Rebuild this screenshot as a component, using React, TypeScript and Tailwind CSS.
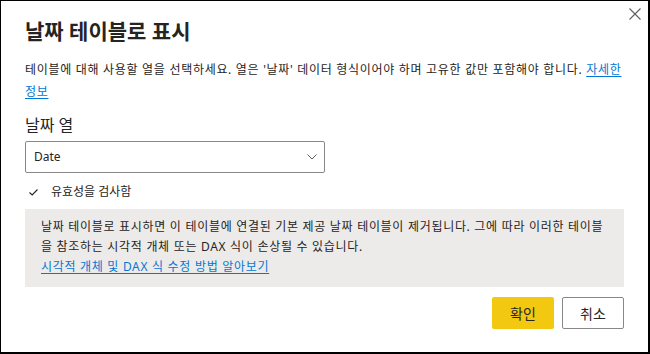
const font = {
  fontFamily: '"Noto Sans", "Noto Sans CJK KR", sans-serif',
};

export default function App() {
  return (
    <div
      style={font}
      className="relative flex h-[354px] w-[650px] flex-col border-t border-l border-r-2 border-b-2 border-black bg-white px-6 text-[#252423]"
    >
      <button type="button" className="absolute right-[7px] top-[7px] text-[#605e5c]">
        <svg width="12" height="12" viewBox="0 0 12 12" fill="none" stroke="currentColor" strokeWidth="1.1">
          <path d="M0.5 0.5 L11.5 11.5 M11.5 0.5 L0.5 11.5" />
        </svg>
      </button>

      <h1 className="mt-[16px] text-[21px] font-bold leading-[28px]">날짜 테이블로 표시</h1>

      <p className="mt-[14px] text-[12px] leading-[22px] tracking-[0.7px]">
        테이블에 대해 사용할 열을 선택하세요. 열은 '날짜' 데이터 형식이어야 하며 고유한 값만 포함해야 합니다.{" "}
        <a className="text-[#0078d4] underline underline-offset-2">자세한 정보</a>
      </p>

      <div className="mt-[11px] text-[16px] leading-[22px]">날짜 열</div>

      <div className="mt-[5px] flex h-[32px] w-[300px] items-center justify-between rounded-[2px] border border-[#8a8886] pl-[8px] pr-[7px]">
        <span className="text-[12px]">Date</span>
        <svg width="10" height="6" viewBox="0 0 10 6" fill="none" stroke="#605e5c" strokeWidth="1">
          <path d="M0.5 0.5 L5 5 L9.5 0.5" />
        </svg>
      </div>

      <div className="mt-[10px] flex h-[18px] items-center gap-[13px] pl-[4px] text-[12px] leading-[18px]">
        <svg width="9" height="7" viewBox="0 0 9 7" fill="none" stroke="#252423" strokeWidth="1.1">
          <path d="M0.5 3.5 L3.2 6 L8.5 0.5" />
        </svg>
        <span>유효성을 검사함</span>
      </div>

      <div className="mt-[8px] bg-[#edebe9] px-[16px] pb-[10px] pt-[8px] text-[12px] leading-[20px] tracking-[0.7px]">
        <p>
          날짜 테이블로 표시하면 이 테이블에 연결된 기본 제공 날짜 테이블이 제거됩니다. 그에 따라 이러한 테이블을 참조하는 시각적 개체 또는 DAX 식이 손상될 수 있습니다.
        </p>
        <a className="text-[#0078d4] underline underline-offset-2">시각적 개체 및 DAX 식 수정 방법 알아보기</a>
      </div>

      <div className="mt-[10px] flex justify-end gap-[8px]">
        <button
          type="button"
          className="h-[32px] w-[62px] rounded-[2px] bg-[#f2c811] text-[14px] text-[#252423]"
        >
          확인
        </button>
        <button
          type="button"
          className="h-[32px] w-[62px] rounded-[2px] border border-[#8a8886] bg-white text-[14px] text-[#252423]"
        >
          취소
        </button>
      </div>
    </div>
  );
}
